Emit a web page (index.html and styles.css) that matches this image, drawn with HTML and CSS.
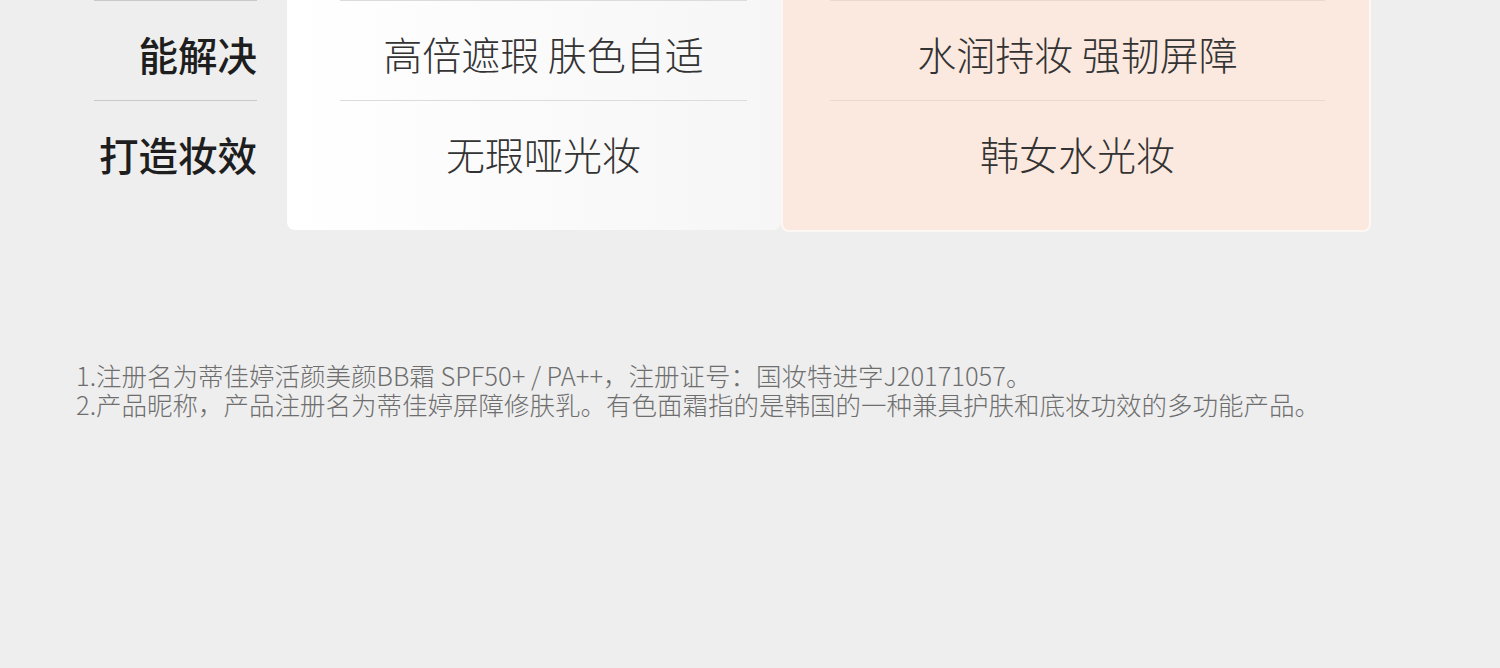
FILE: index.html
```html
<!DOCTYPE html>
<html lang="zh-CN">
<head>
    <meta charset="UTF-8">
    <meta name="viewport" content="width=device-width, initial-scale=1.0">
    <title>产品对比</title>
    <link rel="stylesheet" href="styles.css">
</head>
<body>
    <div class="compare">
        <div class="labels">
            <div class="row">能解决</div>
            <div class="row">打造妆效</div>
        </div>
        <div class="card card-white">
            <div class="row">高倍遮瑕 肤色自适</div>
            <div class="row">无瑕哑光妆</div>
        </div>
        <div class="card card-peach">
            <div class="row">水润持妆 强韧屏障</div>
            <div class="row">韩女水光妆</div>
        </div>
    </div>

    <div class="notes">
        <p>1.注册名为蒂佳婷活颜美颜BB霜 SPF50+ / PA++，注册证号：国妆特进字J20171057。</p>
        <p>2.产品昵称，产品注册名为蒂佳婷屏障修肤乳。有色面霜指的是韩国的一种兼具护肤和底妆功效的多功能产品。</p>
    </div>
</body>
</html>
```

FILE: styles.css
```css
body {
    margin: 0;
    background-color: #eeeeee;
    font-family: "Noto Sans CJK SC", "Noto Sans", sans-serif;
    width: 1500px;
    height: 668px;
    overflow: hidden;
}
.compare {
    display: flex;
    align-items: flex-start;
    padding-left: 94px;
}
.row {
    height: 100px;
    border-top: 1px solid #d4d4d4;
    display: flex;
    align-items: center;
    font-size: 39px;
    line-height: 1;
    padding-top: 6px;
    box-sizing: border-box;
    white-space: nowrap;
}
.labels {
    width: 163px;
    margin-right: 30px;
}
.labels .row {
    justify-content: flex-end;
    border-top-color: #c9c9c9;
    font-weight: 500;
    font-size: 39.5px;
    color: #1e1e1e;
}
.card {
    padding-bottom: 30px;
    border-radius: 0 0 8px 8px;
}
.card .row {
    justify-content: center;
    color: #333;
    font-weight: 300;
}
.card-white {
    width: 494px;
    box-sizing: border-box;
    padding-left: 53px;
    padding-right: 34px;
    background: linear-gradient(to right, #ffffff, #f6f6f6);
}
.card-white .row {
    border-top-color: #dcdcdc;
}
.card-peach {
    width: 590px;
    box-sizing: border-box;
    padding-left: 47px;
    padding-right: 44px;
    background-color: #fbe9df;
    border: 2px solid #fdf7f3;
    border-top: none;
}
.card-peach .row {
    border-top-color: #e9d8ce;
}
.notes {
    margin-top: 128px;
    padding-left: 76px;
    color: #6e6e6e;
    font-size: 25.5px;
    font-weight: 300;
    line-height: 29px;
    white-space: nowrap;
}
.notes p {
    margin: 0;
}
```
